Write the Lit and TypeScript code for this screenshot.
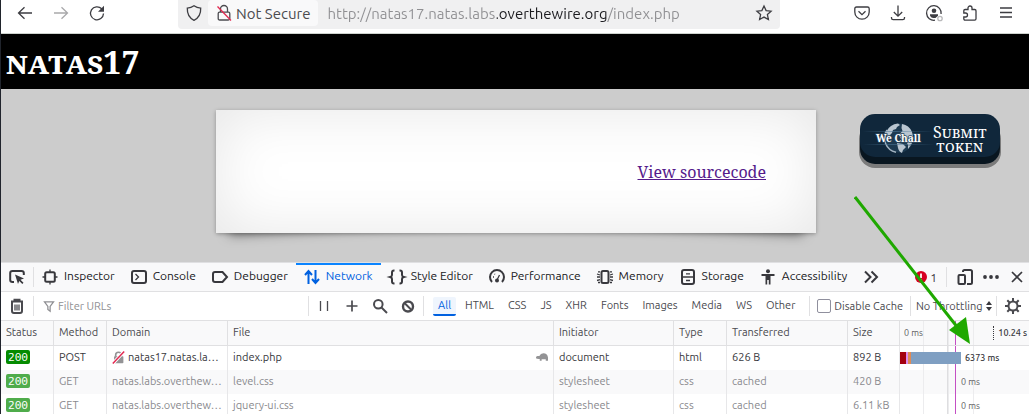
import { LitElement, html, svg, css, TemplateResult } from "lit";
import { customElement, state } from "lit/decorators.js";
import { classMap } from "lit/directives/class-map.js";

const box = (body: TemplateResult, size = 16) =>
  html`<svg class="icon" width=${size} height=${size} viewBox="0 0 16 16" aria-hidden="true">${body}</svg>`;

const icons: Record<string, TemplateResult> = {
  back: svg`<path d="M15 8H1.5M7.5 2.2 1.5 8l6 5.800"/>`,
  forward: svg`<path d="M1 8h13.500M8.500 2.200l6 5.800-6 5.800"/>`,
  reload: svg`<path d="M14.500 8.500A6.500 6.500 0 1 1 12.700 3.800L14 5"/><path class="fill" d="M15 .8v6H9z"/>`,
  shield: svg`<path d="M8 .8C10 2.300 12.300 3 14.700 3.100c.2 5.200-1.500 9.800-6.700 12.200C2.800 12.900 1.100 8.300 1.300 3.100 3.700 3 6 2.300 8 .8z"/>`,
  insecure: svg`<path d="M4.500 7V4a3.500 3.500 0 0 1 7 0v3M3.500 7.200h9q1.300 0 1.300 1.300v5q0 1.500-1.500 1.500h-8.600q-1.500 0-1.500-1.500v-5q0-1.300 1.300-1.300z"/><path class="cut" d="M1.500 1.500l13.500 14"/>`,
  star: svg`<path d="M8 1l2.100 4.600 5 .6-3.700 3.400 1 5-4.400-2.500-4.400 2.500 1-5L.9 6.200l5-.6z"/>`,
  pocket: svg`<path d="M2.500 2h11q1.700 0 1.700 1.700V7A7.200 7.200 0 0 1 .8 7V3.700Q.8 2 2.500 2z"/><path d="M4.500 6.300 8 9.600l3.500-3.300"/>`,
  download: svg`<path d="M8 .5v10.500M3.800 7 8 11.200 12.200 7M1.500 12v1q0 1.700 1.700 1.700h9.600q1.700 0 1.700-1.700v-1"/>`,
  account: svg`<path d="M9 15.200A7.300 7.300 0 1 1 15.100 9"/><circle class="fill" cx="8" cy="5.700" r="2.300"/><path class="fill" d="M4 9.200h8v1.500L9.500 13H7Q4.500 12.600 4 10.500z"/><circle class="pale" cx="14" cy="13.500" r="2.200"/>`,
  extension: svg`<path d="M1.800 7.500V5.800q0-1.300 1.300-1.300H6V3a2 2 0 0 1 4 0v1.500h2.700q1.300 0 1.300 1.300v8q0 1.300-1.300 1.300H3.100q-1.300 0-1.300-1.300V12h1.700a2 2 0 0 0 0-4H1.800z"/>`,
  menu: svg`<path d="M2 3h12M2 7.500h12M2 12h12"/>`,
  picker: svg`<path class="bold" d="M5 13H3.500Q1.200 13 1.200 11V4Q1.200 2 3.500 2h9q2.300 0 2.300 2v2"/><path class="fill" d="M6 5.500l9 4-3.500 1.300 3 3-1.200 1.200-3-3L9 15z"/>`,
  inspector: svg`<rect class="bold" x="3.200" y="3.200" width="9.600" height="9.600" rx="1.500"/><path d="M8 .5V3M8 13v2.500M.5 8H3M13 8h2.500"/>`,
  console: svg`<rect class="bold" x="1" y="2" width="14" height="12" rx="2"/><path d="M4.500 5l3 3-3 3"/>`,
  debugger: svg`<path class="bold" d="M3 3h7.500L15 8l-4.500 5H3q-2 0-2-2V5q0-2 2-2z"/>`,
  network: svg`<path class="bold" d="M4.500 15V2.500M1 6l3.500-4L8 6M11.500 1v12.500M8 10l3.500 4L15 10"/>`,
  style: svg`<path class="bold" d="M5.500 1.500H5q-2 0-2 2V6q0 1.500-1.800 2Q3 8.500 3 10v2.500q0 2 2 2h.5M10.500 1.500h.5q2 0 2 2V6q0 1.500 1.800 2-1.800.5-1.800 2v2.500q0 2-2 2h-.5"/>`,
  performance: svg`<path class="bold" d="M3 13A7 7 0 1 1 13 13"/><circle class="fill" cx="8" cy="11.500" r="2"/><path d="M8 11l2.500-5"/><path d="M4 8h1M5.500 4.800l.5.6"/>`,
  memory: svg`<rect class="bold" x="4.500" y="2" width="7" height="12" rx="1.500"/><path d="M0 5l3 1M0 8h3M0 11.500l3-.8M13 6l3-1M13 8h3M13 10.700l3 .8M1 2.800h2M13 2.800h2M1 13.500h2M13 13.500h2"/>`,
  storage: svg`<rect class="bold" x="2" y="1" width="12" height="14" rx="2"/><path d="M2 8h12M6 4.800h4M6 11.500h4"/>`,
  accessibility: svg`<circle class="fill" cx="8" cy="2.200" r="2"/><path class="fill" d="M1.500 5h13v2h-4v8.500H8.800V11H7.200v4.500H5.500V7h-4z"/>`,
  more: svg`<path class="bold" d="M2 2.500 7.500 8 2 13.500M8.500 2.500 14 8l-5.500 5.500"/>`,
  responsive: svg`<path class="bold" d="M6 3V2.500Q6 1 7.500 1h5.700Q15 1 15 2.500v11q0 1.500-1.500 1.500H10"/><rect class="bold" x="1.500" y="6" width="6.500" height="9" rx="1"/>`,
  dots: svg`<circle class="fill" cx="2" cy="8" r="1.900"/><circle class="fill" cx="8" cy="8" r="1.900"/><circle class="fill" cx="14" cy="8" r="1.900"/>`,
  close: svg`<path class="mid" d="M3 3l10 10M13 3 3 13"/>`,
  trash: svg`<path class="bold" d="M3 4.500v8.500q0 2 2 2h6q2 0 2-2V4.500M2 3.500h12M5.500 3V1.800h5V3"/><path d="M6 6.500v6M8 6.500v6M10 6.500v6"/>`,
  pause: svg`<path d="M4.500 3v10M11.500 3v10"/>`,
  plus: svg`<path class="mid" d="M8 2.500v11M2.500 8h11"/>`,
  search: svg`<circle class="bold" cx="6.300" cy="6.300" r="4.300"/><path class="bold" d="M9.500 9.500 15 15"/>`,
  block: svg`<circle class="heavy" cx="8" cy="8.500" r="5"/><path class="bold" d="M4.500 5l7 7"/>`,
  funnel: svg`<path class="mid" d="M2 2.500h12L9.500 8.500V15L6.500 12.500v-4z"/>`,
  gear: svg`<circle class="bold" cx="8" cy="8" r="4.500"/><path class="bold" d="M8 0v3M8 13v3M0 8h3M13 8h3M2.300 2.300l2.200 2.200M11.500 11.500l2.200 2.200M13.700 2.300l-2.200 2.200M4.500 11.500l-2.200 2.200"/>`,
  lockRow: svg`<path class="bold" d="M4.500 7V5a3.500 3.500 0 0 1 7 0v2"/><rect class="fill" x="2.500" y="6.500" width="11.500" height="8.500" rx="1"/><path class="gap" d="M1 15.500 15 .5"/><path class="cut wide" d="M1 15.500 15 .5"/>`,
  turtle: svg`<path class="fill" d="M0 8.500Q0 6.500 2 6.500h2.500Q6 3 9.800 3 15 3 16 8.500V13h-3v-2H7.500v2H5V10.500Q1 10.700 0 9.500z"/>`,
};

interface Request {
  method: string;
  domain: string;
  file: string;
  initiator: string;
  type: string;
  transferred: string;
  size: string;
  time: string;
  slow?: boolean;
}

const tabs = [
  ["Inspector", "inspector"],
  ["Console", "console"],
  ["Debugger", "debugger"],
  ["Network", "network"],
  ["Style Editor", "style"],
  ["Performance", "performance"],
  ["Memory", "memory"],
  ["Storage", "storage"],
  ["Accessibility", "accessibility"],
];

const filters = ["All", "HTML", "CSS", "JS", "XHR", "Fonts", "Images", "Media", "WS", "Other"];

const requests: Request[] = [
  { method: "POST", domain: "natas17.natas.la…", file: "index.php", initiator: "document", type: "html", transferred: "626 B", size: "892 B", time: "6373 ms", slow: true },
  { method: "GET", domain: "natas.labs.overthew…", file: "level.css", initiator: "stylesheet", type: "css", transferred: "cached", size: "420 B", time: "0 ms" },
  { method: "GET", domain: "natas.labs.overthew…", file: "jquery-ui.css", initiator: "stylesheet", type: "css", transferred: "cached", size: "6.11 kB", time: "0 ms" },
];

const shared = css`
  * { box-sizing: border-box; }
  button, input, select { font: inherit; color: inherit; border: 0; padding: 0; margin: 0; background: none; }
  .icon { flex: none; display: block; fill: none; stroke: currentColor; stroke-width: 1.3; overflow: visible; }
  .icon .fill { fill: currentColor; stroke: none; }
  .icon .mid { stroke-width: 1.7; }
  .icon .bold { stroke-width: 2; }
  .icon .heavy { stroke-width: 2.4; }
  .icon .cut { stroke: #e22850; }
  .icon .wide { stroke-width: 1.8; }
  .icon .gap { stroke: #fff; stroke-width: 4; }
  .icon .pale { stroke: #b9b9bb; fill: #fff; }
`;

@customElement("browser-bar")
class BrowserBar extends LitElement {
  static styles = [shared, css`
    :host { display: flex; align-items: flex-start; box-sizing: border-box; height: 34px; padding: 0 15px 0 16px; background: #fff; border-bottom: 1px solid #ced3ce; color: #3d3d42; font-size: 15px; }
    .nav, .tools { display: flex; gap: 20px; padding-top: 5px; }
    .nav { width: 161px; }
    .tools { width: 234px; justify-content: flex-end; }
    .off { color: #a9a9ab; }
    .field { flex: 1; display: flex; align-items: center; height: 29px; padding: 0 8px 3px; background: #f0f0f1; border-radius: 0 0 4px 4px; }
    .chip { display: flex; align-items: center; align-self: stretch; gap: 4px; padding: 0 8px; margin: 0 9px 0 6px; background: #f9f9fa; border-radius: 4px; color: #4b4b50; white-space: nowrap; }
    .url { flex: 1; min-width: 0; height: 24px; outline: 0; color: transparent; background: linear-gradient(90deg, #8f8f92 170px, #1b1b1f 170px 280px, #8f8f92 280px); background-clip: text; -webkit-background-clip: text; }
  `];
  render() {
    const tool = (name: string, label: string, off = false) =>
      html`<button class=${classMap({ off })} aria-label=${label}>${box(icons[name])}</button>`;
    return html`
      <div class="nav">${tool("back", "Back")}${tool("forward", "Forward", true)}${tool("reload", "Reload")}</div>
      <div class="field">
        ${tool("shield", "Tracking protection")}
        <button class="chip">${box(icons.insecure)}Not Secure</button>
        <input class="url" aria-label="Address" value="http://natas17.natas.labs.overthewire.org/index.php">
        ${tool("star", "Bookmark")}
      </div>
      <div class="tools">
        ${tool("pocket", "Pocket")}${tool("download", "Downloads")}${tool("account", "Account")}${tool("extension", "Extensions")}${tool("menu", "Menu")}
      </div>`;
  }
}

@customElement("natas-page")
class NatasPage extends LitElement {
  static styles = [shared, css`
    :host { display: block; background: #ccc; font-family: "Noto Serif", "Liberation Serif", serif; }
    h1 { margin: 0; height: 55px; padding: 0 5px; background: #000; color: #fff; font-size: 32px; line-height: 56px; font-variant: small-caps; }
    main { display: grid; grid-template-columns: 1fr 600px 1fr; height: 173px; padding: 21px 0 0 2px; align-items: start; }
    .card { grid-column: 2; position: relative; z-index: 0; height: 123px; padding: 50px; text-align: right; font-size: 16px; line-height: 24px; }
    .sheet { position: absolute; inset: 0; z-index: -1; background: #fff; box-shadow: 0 1px 4px rgba(0, 0, 0, .3), inset 0 0 60px rgba(0, 0, 0, .1); }
    .card::before, .card::after { content: ""; position: absolute; z-index: -2; bottom: 14px; left: 12px; width: 50%; height: 20%; box-shadow: 0 8px 12px rgba(0, 0, 0, .5); transform: rotate(-3deg); }
    .card::after { left: auto; right: 12px; transform: rotate(3deg); }
    a { color: #551a8b; }
    .submit { justify-self: end; display: flex; align-items: center; gap: 10px; width: 140px; height: 43px; margin: 4px 29px 0 0; padding: 6px 14px 0 15px; border-radius: 15px; background: #10273b; color: #fff; box-shadow: 0 7px 0 #091620, 0 10px 0 1px #7b7b7b; font-size: 16px; line-height: 14px; font-variant: small-caps; }
    .logo { flex: none; overflow: visible; font: bold 10px "Noto Serif", serif; }
  `];
  render() {
    return html`
      <h1>natas17</h1>
      <main>
        <div class="card"><div class="sheet"></div><a href="#source">View sourcecode</a></div>
        <button class="submit">
          <svg class="logo" width="48" height="32" viewBox="0 0 48 32" aria-label="We Chall">
            <defs><linearGradient id="ray"><stop stop-color="#4d7898" stop-opacity="0"/><stop offset=".4" stop-color="#4d7898" stop-opacity=".6"/><stop offset="1" stop-color="#4d7898" stop-opacity="0"/></linearGradient></defs>
            <circle cx="24" cy="15" r="14.500" fill="#1d3a51"/>
            <path fill="#b9c5d0" d="M11 9Q15 1 23 .5l2 1.500-3 2-1 2-3 1-1 3-3 3-3-1zM27 1q7 1 10 8l1.500 6-2 6-3 2-2-4-4-1-2-3-1-4 3-3-1-3zM22 20l6 1 3 3-3 3-1 3q-3-1-4-5z"/>
            <path fill="none" stroke="#a3b3c1" stroke-width="1.500" d="M21 29.300A14.500 14.500 0 0 1 12 7"/>
            <path fill="#b9c5d0" d="M33 23l3-1-3 4z"/>
            <rect x="-12" y="8" width="72" height="1" fill="url(#ray)"/><rect x="-12" y="21" width="72" height="1" fill="url(#ray)"/>
            <text x="1" y="19" fill="#fff" stroke="#2b465c" stroke-width="1.500" paint-order="stroke">We Chall</text>
          </svg>
          <span>Submit token</span>
        </button>
      </main>`;
  }
}

@customElement("dev-tools")
class DevTools extends LitElement {
  @state() active = "All";
  static styles = [shared, css`
    :host { display: block; background: #fff; border-top: 1px solid #e0e0e2; color: #38383d; font-size: 11px; }
    .tabs, .bar { display: flex; align-items: center; border-bottom: 1px solid #e0e0e2; white-space: nowrap; }
    .tabs { height: 29px; background: #f9f9fa; font-size: 12px; }
    .bar { height: 29px; color: #4a4a4f; padding-right: 8px; }
    .sep { flex: none; width: 1px; height: 20px; background: #e0e0e2; }
    .push { flex: 1; }
    .tool { padding: 0 8px; }
    .tab { display: flex; align-items: center; gap: 6px; height: 28px; padding: 0 8px 2px; color: #18181a; border-top: 2px solid transparent; line-height: 16px; }
    .tab span { padding-bottom: 2px; }
    .tab .icon { color: #38383d; }
    .tab.on, .tab.on .icon { color: #0061e0; }
    .tab.on { border-top-color: #0a84ff; }
    .error { display: flex; align-items: center; gap: 3px; padding-right: 9px; }
    .window { display: flex; gap: 10px; padding: 0 4px 0 10px; }
    .search { flex: 1; display: flex; align-items: center; gap: 3px; padding-left: 9px; color: #8f8f93; }
    .search input { flex: 1; min-width: 0; outline: 0; }
    .search input::placeholder { color: #8f8f93; }
    .actions { display: flex; gap: 12px; padding: 0 7px; }
    .filters { display: flex; gap: 4px; padding: 0 9px; }
    .filter { height: 19px; padding: 0 5px; border-radius: 2px; border-bottom: 2px solid transparent; }
    .filter.on { color: #0061e0; background: #eff5fd; border-bottom-color: #0061e0; }
    .check { display: flex; align-items: center; gap: 3px; padding: 0 7px; }
    .check input { appearance: none; width: 14px; height: 14px; border: 1px solid #8f8f9d; border-radius: 2px; background: #fff; }
    .throttle { display: flex; align-items: center; gap: 2px; padding: 0 3px 0 5px; }
    .throttle select { appearance: none; outline: 0; }
    .gear { padding-left: 8px; }
    table { width: 100%; table-layout: fixed; border-collapse: separate; border-spacing: 0; }
    th, td { height: 24px; padding: 0 5px 2px; border-right: 1px solid #e7e7e9; text-align: left; font-weight: normal; white-space: nowrap; line-height: 14px; }
    th { height: 25px; background: #f9f9fa; border-right-color: #e0e0e2; border-bottom: 1px solid #e0e0e2; color: #4a4a4f; }
    th:last-child, td:last-child { border-right: 0; padding: 0; }
    .c53 { width: 53px; } .c121 { width: 121px; } .c120 { width: 120px; } .c52 { width: 52px; } .c129 { width: 129px; }
    tbody tr:nth-child(even) { background: #f9f9fa; }
    .dim td { color: #8a8a8e; }
    .code { display: block; width: 24px; height: 14px; text-align: center; border-radius: 2px; background: #058b00; color: #fff; font: 12px/14px "Ubuntu Mono", "DejaVu Sans Mono", monospace; }
    .dim .code { background: #4fac4b; }
    .host, .name { display: flex; align-items: center; gap: 3px; }
    .host .icon, .name .icon { color: #939395; }
    .text { flex: 1; }
    .lane { display: flex; align-items: center; height: 24px; font-size: 9px; color: #5f5f63; background: linear-gradient(90deg, transparent 55px, #c44fc4 55px 56px, transparent 56px), linear-gradient(90deg, transparent 47px, #dedee0 47px 48px, transparent 48px), repeating-linear-gradient(90deg, transparent 0 23px, #ececee 23px 24px, transparent 24px 25px) 0 0 / 74px 100% no-repeat; }
    .scale { justify-content: space-between; padding: 0 2px 0 4px; }
    .end { padding-left: 4px; border-left: 1px dotted #38383d; color: #38383d; font-weight: 500; }
    .blocked, .dns, .connect, .wait { height: 12px; }
    .blocked { width: 6px; background: #a4000f; }
    .dns { width: 2px; background: #dd8cf0; }
    .connect { width: 3px; background: #e08a55; }
    .wait { width: 50px; background: #7f9fc2; }
    .time { padding-left: 4px; }
    .dim .time { padding-left: 61px; }
    .slow { font-weight: 500; color: #38383d; }
  `];
  render() {
    const tool = (name: string, label: string) =>
      html`<button class="tool" aria-label=${label}>${box(icons[name])}</button>`;
    return html`
      <div class="tabs" role="tablist">
        ${tool("picker", "Pick an element")}<span class="sep"></span>
        ${tabs.map(([label, icon]) => html`<button role="tab" class=${classMap({ tab: true, on: label === "Network" })}>${box(icons[icon])}<span>${label}</span></button>`)}
        ${tool("more", "More tools")}
        <span class="push"></span>
        <button class="error" aria-label="Show errors">
          <svg width="12" height="12" viewBox="0 0 12 12"><circle cx="6" cy="6" r="6" fill="#d70022"/><path d="M6 2.500v4.500M6 8.200v1.600" stroke="#fff" stroke-width="1.800"/></svg>1
        </button>
        <span class="sep"></span>
        <div class="window">
          ${[["responsive", "Responsive mode"], ["dots", "Options"], ["close", "Close"]].map(([n, l]) => html`<button aria-label=${l}>${box(icons[n])}</button>`)}
        </div>
      </div>
      <div class="bar">
        ${tool("trash", "Clear")}<span class="sep"></span>
        <label class="search">${box(icons.funnel, 12)}<input placeholder="Filter URLs" aria-label="Filter URLs"></label>
        <span class="sep"></span>
        <div class="actions">
          ${[["pause", "Pause"], ["plus", "New request"], ["search", "Search"], ["block", "Blocking"]].map(([n, l]) => html`<button aria-label=${l}>${box(icons[n])}</button>`)}
        </div>
        <span class="sep"></span>
        <div class="filters">
          ${filters.map((f) => html`<button class=${classMap({ filter: true, on: f === this.active })} @click=${() => (this.active = f)}>${f}</button>`)}
        </div>
        <span class="sep"></span>
        <label class="check"><input type="checkbox">Disable Cache</label>
        <span class="sep"></span>
        <label class="throttle"><select aria-label="Throttling"><option>No Throttling</option></select>
          <svg width="8" height="10" viewBox="0 0 8 10"><path d="M1 4 4 0l3 4zM1 6l3 4 3-4z" fill="#38383d"/></svg></label>
        <span class="sep"></span>
        <button class="gear" aria-label="Settings">${box(icons.gear)}</button>
      </div>
      <table>
        <thead><tr>
          <th class="c53">Status</th><th class="c53">Method</th><th class="c121">Domain</th><th>File</th><th class="c120">Initiator</th>
          <th class="c53">Type</th><th class="c121">Transferred</th><th class="c52">Size</th>
          <th class="c129"><div class="lane scale"><span>0 ms</span><span class="end">10.24 s</span></div></th>
        </tr></thead>
        <tbody>${requests.map((r) => html`
          <tr class=${classMap({ dim: !r.slow })}>
            <td><span class="code">200</span></td>
            <td>${r.method}</td>
            <td><div class="host">${r.slow ? box(icons.lockRow, 13) : ""}<span class="text">${r.domain}</span></div></td>
            <td><div class="name"><span class="text">${r.file}</span>${r.slow ? box(icons.turtle, 12) : ""}</div></td>
            <td>${r.initiator}</td><td>${r.type}</td><td>${r.transferred}</td><td>${r.size}</td>
            <td><div class="lane">${r.slow
              ? html`<i class="blocked"></i><i class="dns"></i><i class="connect"></i><i class="wait"></i>` : ""}
              <span class=${classMap({ time: true, slow: !!r.slow })}>${r.time}</span></div></td>
          </tr>`)}</tbody>
      </table>`;
  }
}

@customElement("app-root")
class AppRoot extends LitElement {
  static styles = css`
    :host { display: block; position: relative; box-sizing: border-box; height: 100vh; overflow: hidden; border-left: 1px solid #20242c; background: #fff; font-family: Ubuntu, "Open Sans", "Noto Sans", sans-serif; }
    .arrow { position: absolute; top: 196px; right: 57px; pointer-events: none; }
  `;
  render() {
    return html`
      <browser-bar></browser-bar>
      <natas-page></natas-page>
      <dev-tools></dev-tools>
      <svg class="arrow" width="118" height="150" viewBox="0 0 118 150" aria-hidden="true">
        <path d="M1 1 104 132" stroke="#1fa800" stroke-width="3"/>
        <path d="M116 148 95 134 112 121z" fill="#1fa800"/>
      </svg>`;
  }
}
